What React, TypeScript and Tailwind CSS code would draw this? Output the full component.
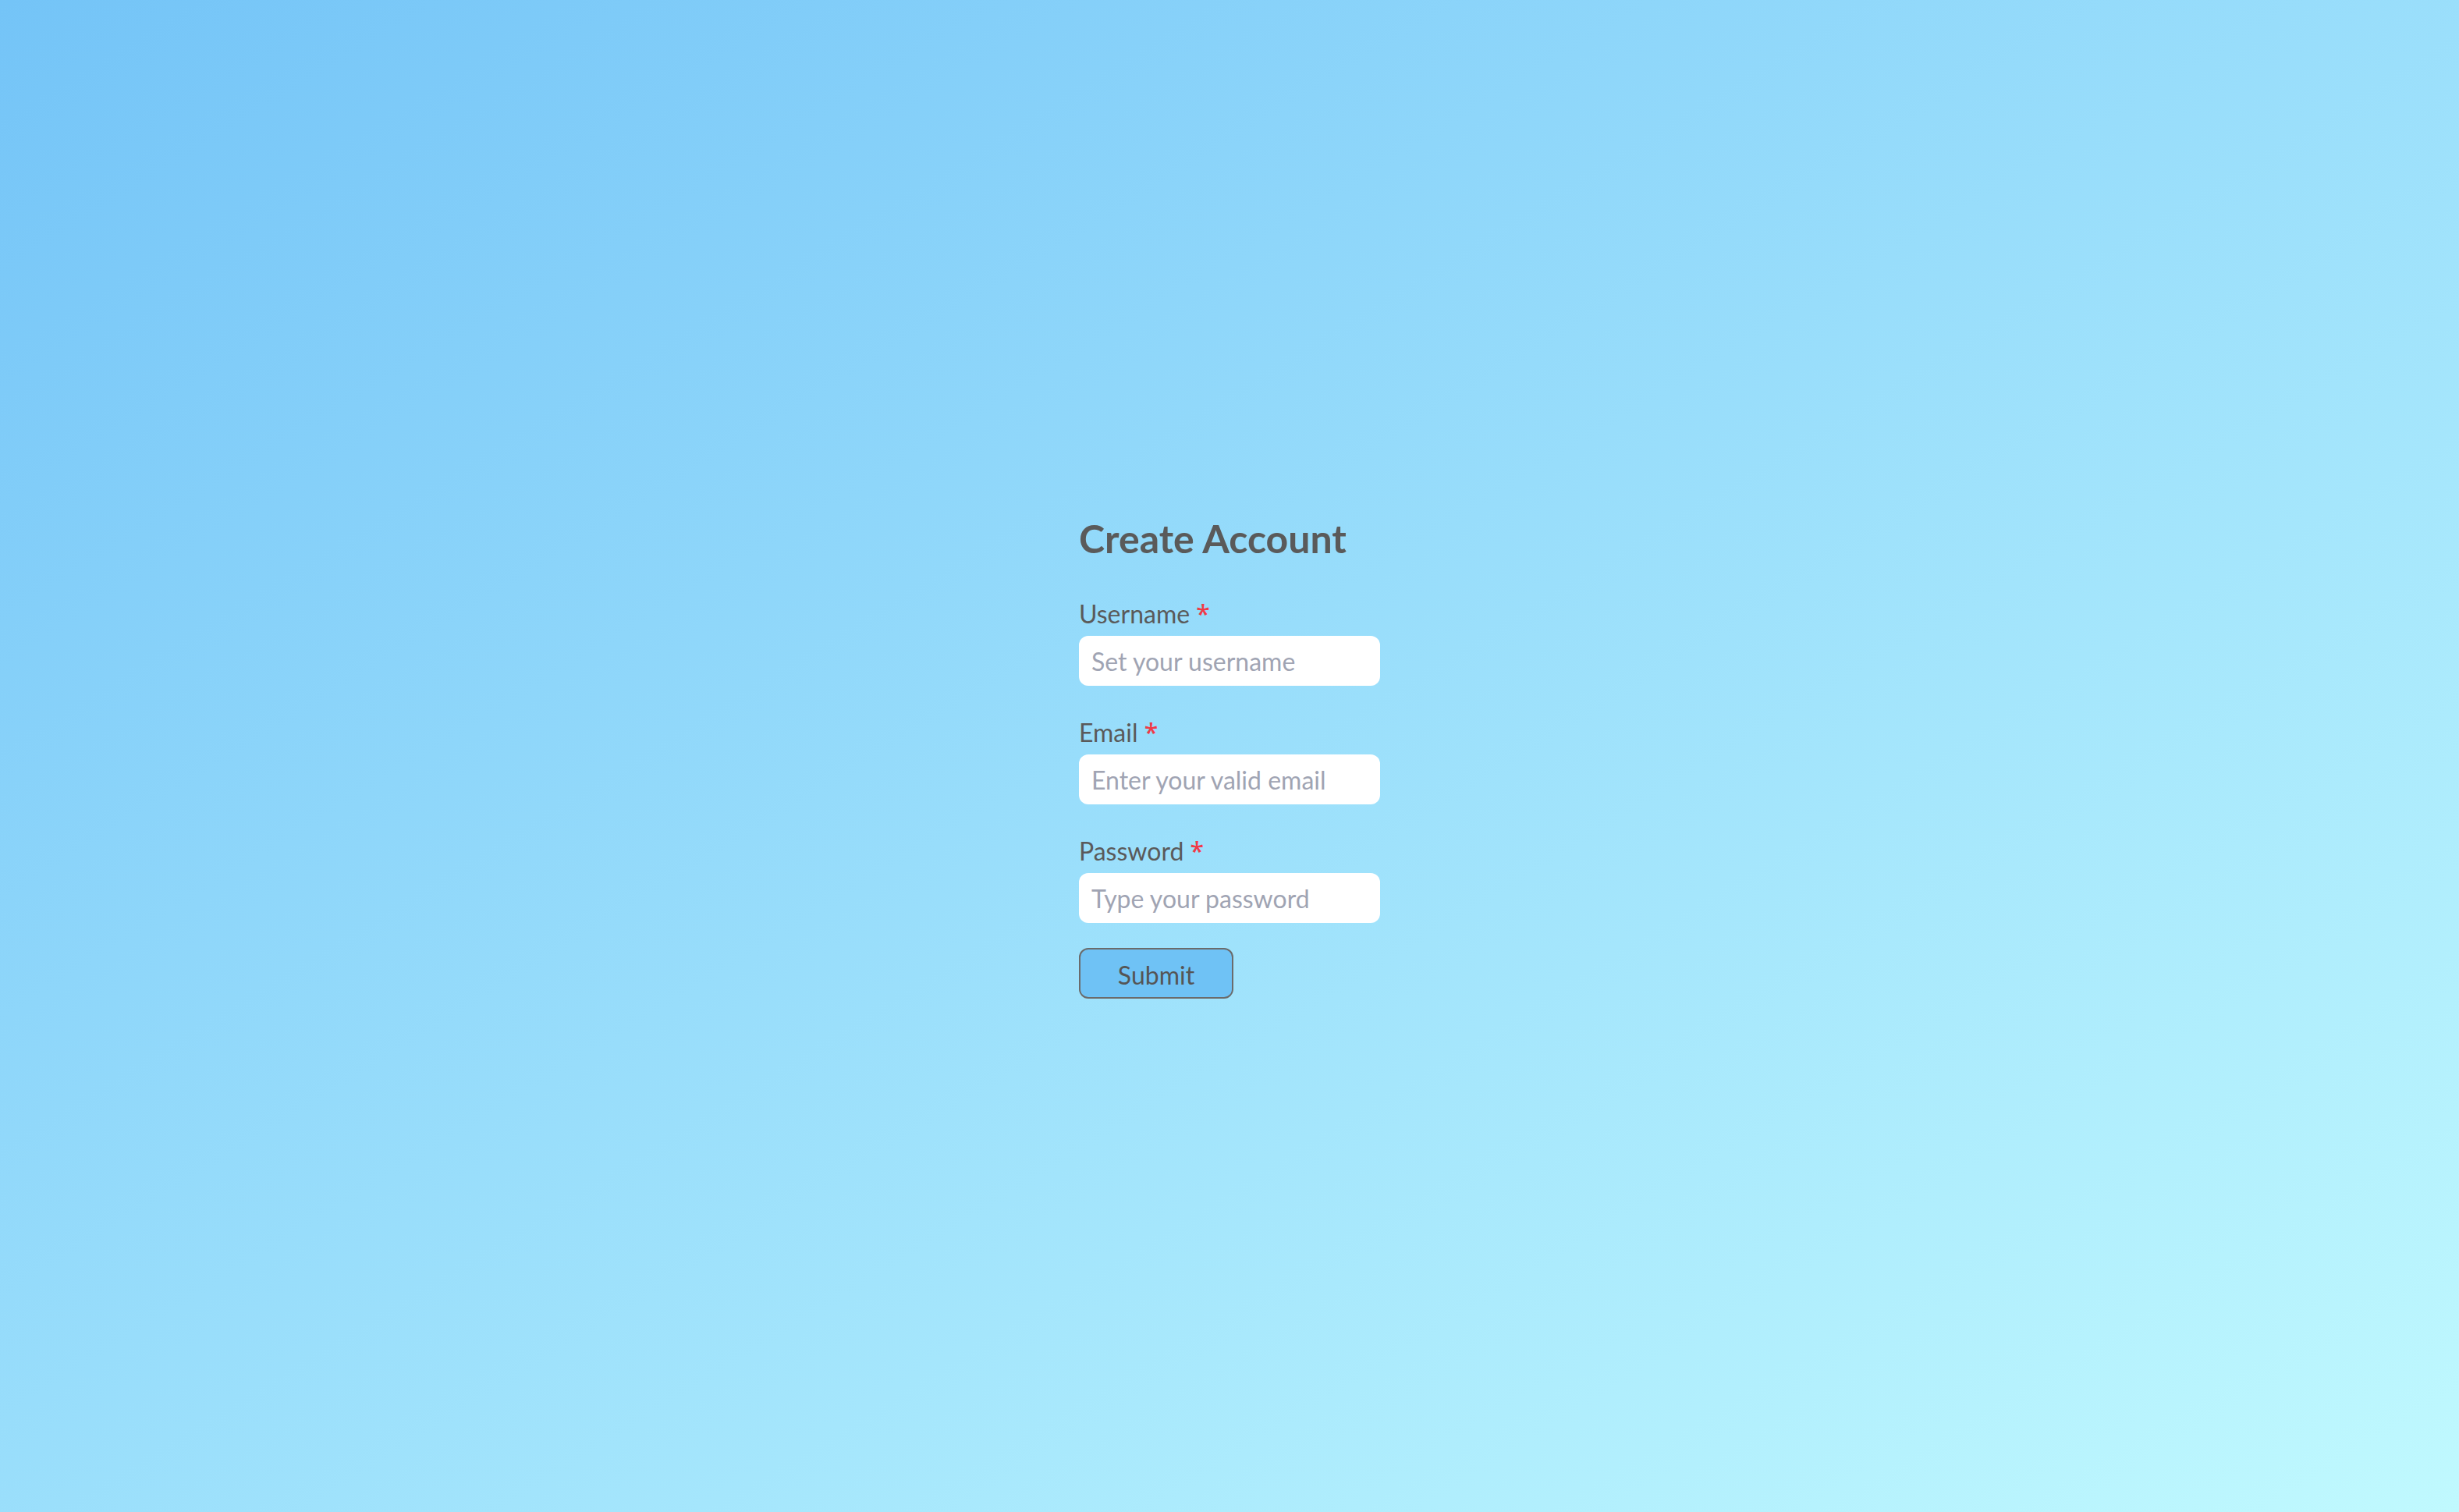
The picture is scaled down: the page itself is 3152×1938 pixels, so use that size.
import { useState } from 'react';

const fieldClass =
  'w-full h-[64px] rounded-[12px] bg-white px-4 text-[32px] text-[#555] placeholder:text-[#a0a4b3] outline-none border-0';

function Field({ label, type, placeholder, value, onChange }: {
  label: string;
  type: string;
  placeholder: string;
  value: string;
  onChange: (v: string) => void;
}) {
  return (
    <div className="flex flex-col">
      <label className="text-[32px] leading-[48px] text-[#5a5a5a] mb-[4px]">
        {label}{' '}
        <span className="text-[#f03a47] font-['Noto_Sans',sans-serif] font-medium">*</span>
      </label>
      <input
        type={type}
        placeholder={placeholder}
        value={value}
        onChange={(e) => onChange(e.target.value)}
        className={fieldClass}
      />
    </div>
  );
}

export default function App() {
  const [username, setUsername] = useState('');
  const [email, setEmail] = useState('');
  const [password, setPassword] = useState('');

  return (
    <div
      className="min-h-screen w-full flex items-center justify-center bg-linear-to-br from-[#74c4f7] to-[#c0f9fe]"
      style={{ fontFamily: 'Lato, "Noto Sans", sans-serif' }}
    >
      <form
        className="w-[386px] flex flex-col"
        onSubmit={(e) => e.preventDefault()}
      >
        <h1 className="text-[50px] leading-[64px] font-bold text-[#5a5a5a] mb-[41px]">
          Create Account
        </h1>
        <div className="flex flex-col gap-[36px]">
          <Field label="Username" type="text" placeholder="Set your username" value={username} onChange={setUsername} />
          <Field label="Email" type="email" placeholder="Enter your valid email" value={email} onChange={setEmail} />
          <Field label="Password" type="password" placeholder="Type your password" value={password} onChange={setPassword} />
        </div>
        <div className="mt-[32px]">
          <button
            type="submit"
            className="w-[198px] h-[65px] rounded-[12px] border-2 border-[#6b6b6b] bg-[#6fc2f5] pt-[4px] text-[32px] text-[#555]"
          >
            Submit
          </button>
        </div>
      </form>
    </div>
  );
}
